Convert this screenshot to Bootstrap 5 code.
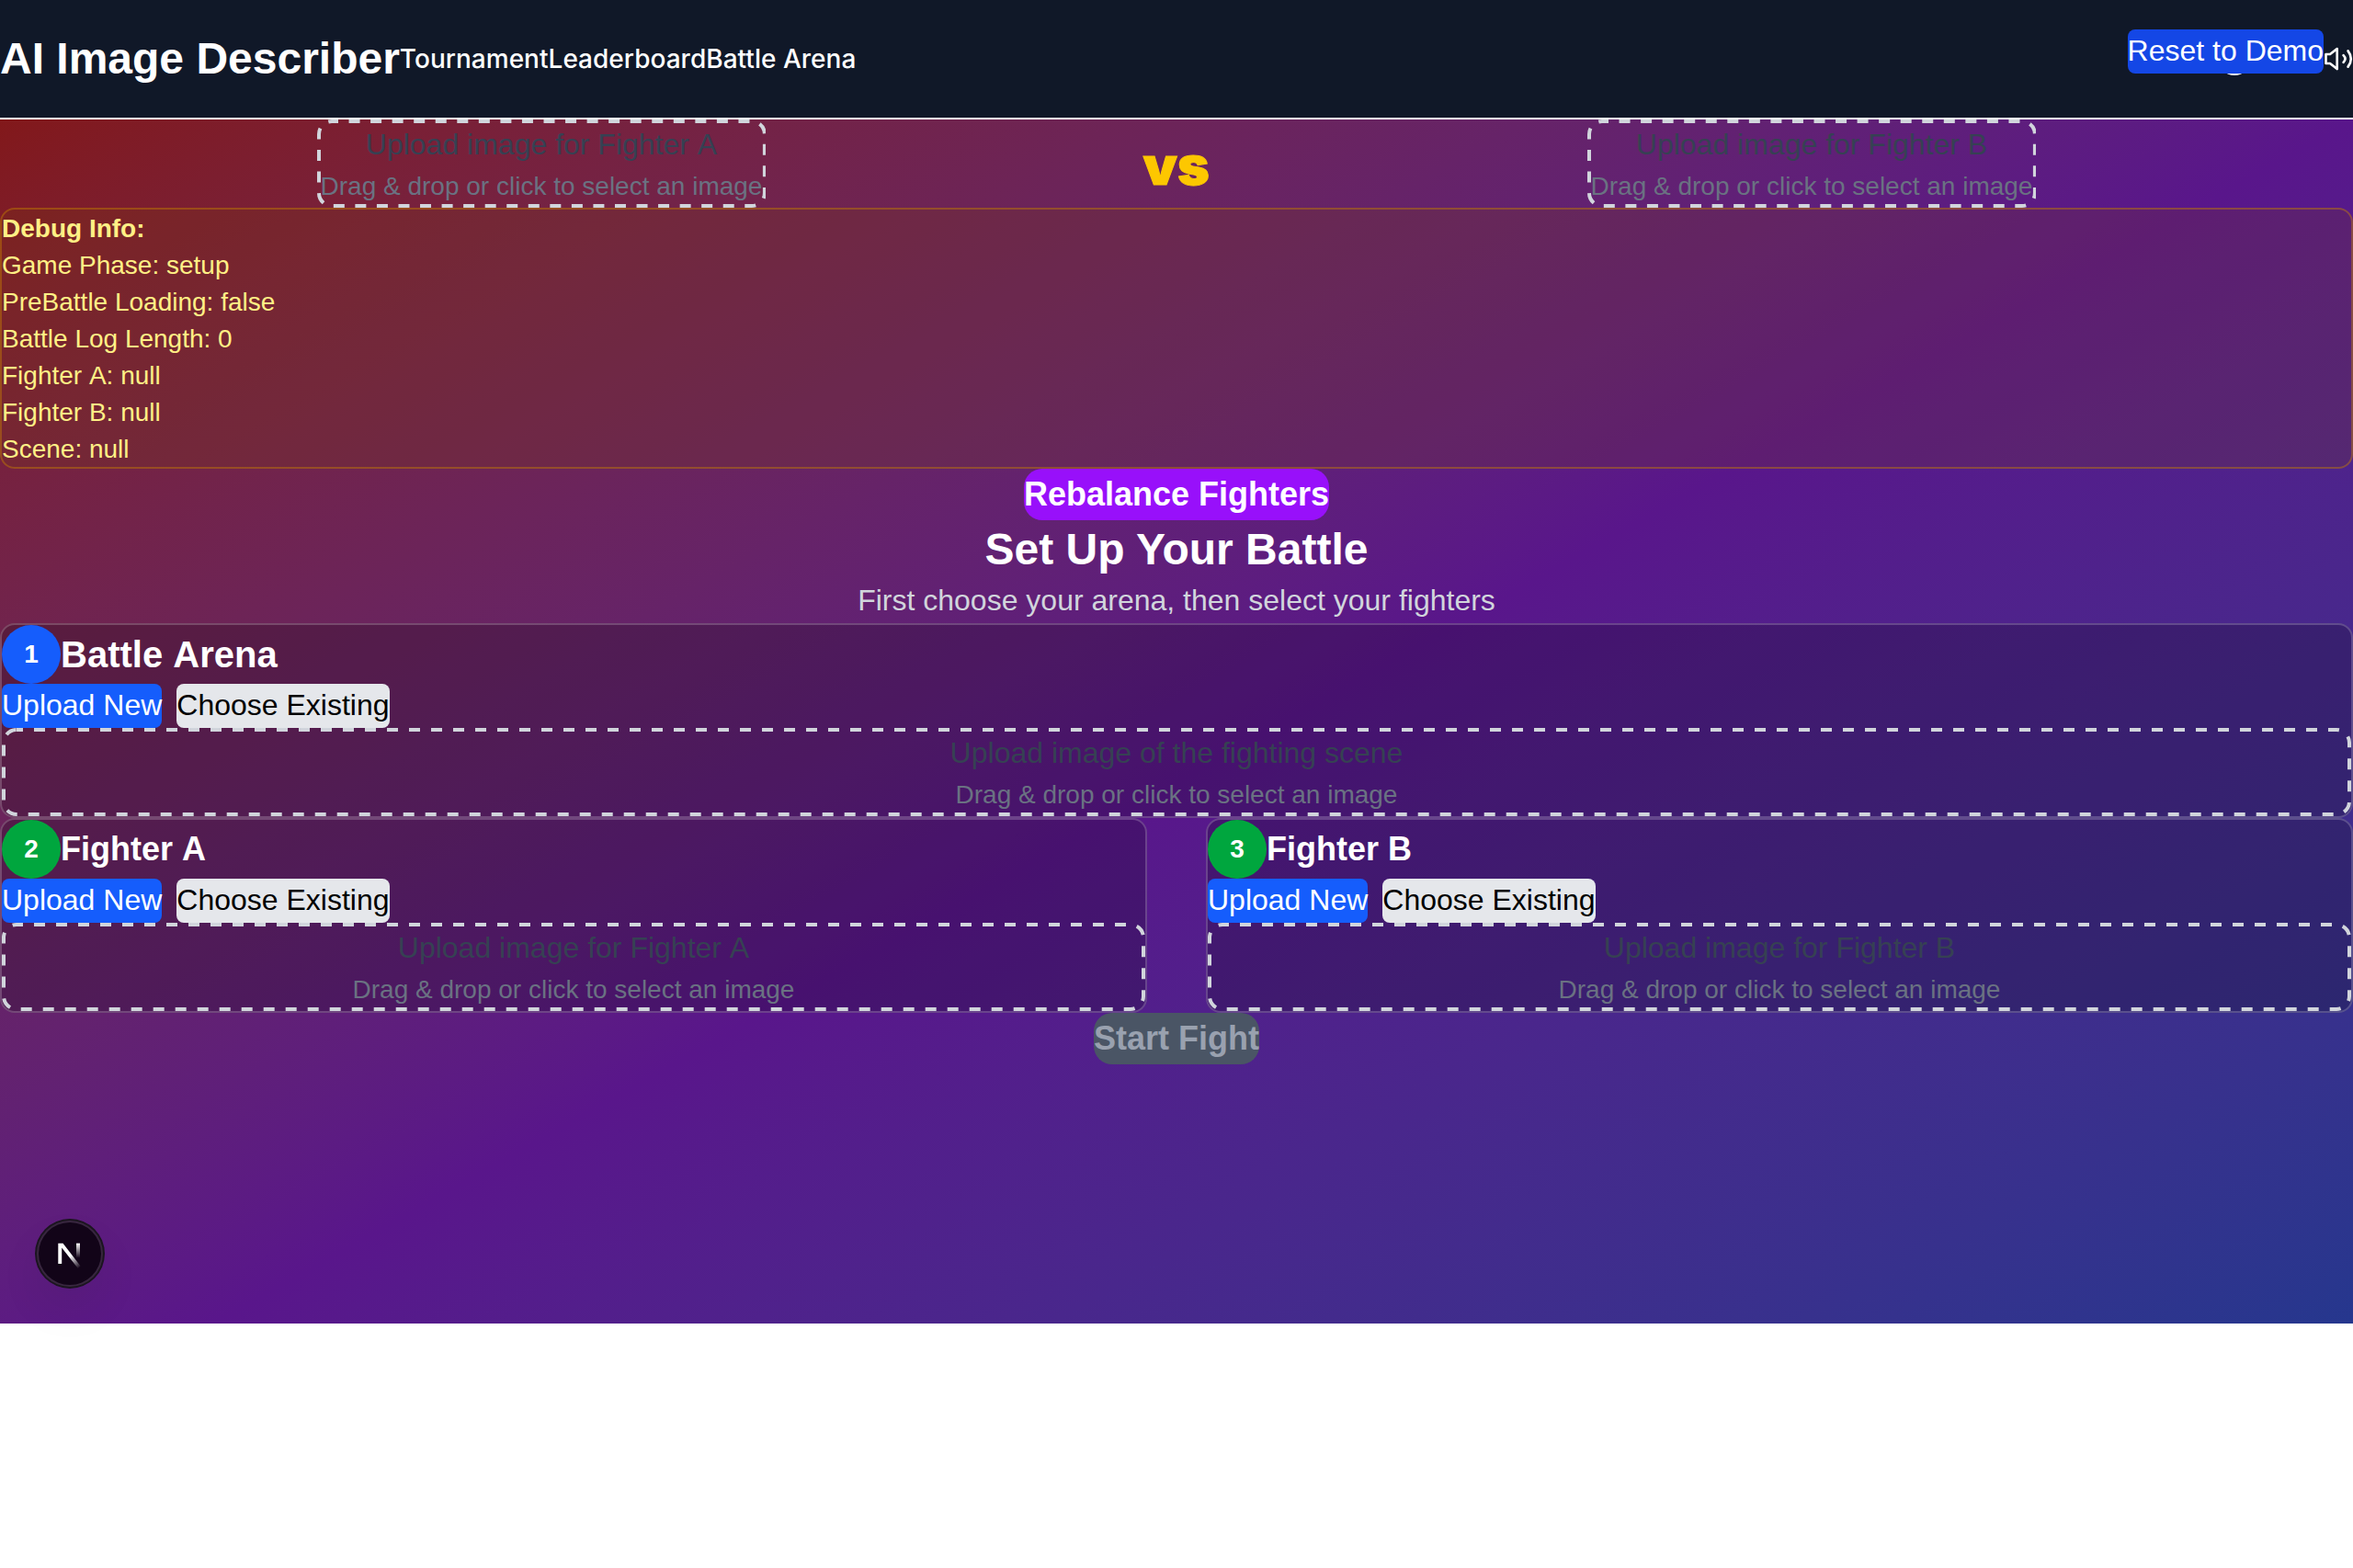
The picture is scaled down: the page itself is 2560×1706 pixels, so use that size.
<!DOCTYPE html>
<html lang="en">
<head>
<meta charset="utf-8">
<title>AI Image Describer</title>
<link href="https://cdn.jsdelivr.net/npm/bootstrap@5.3.0/dist/css/bootstrap.min.css" rel="stylesheet">
<style>
body{font-family:"Liberation Sans",Arial,sans-serif;font-size:32px;line-height:48px;color:#000;background:#fff;overflow:hidden}
.topbar{height:130px;background:#101828;border-bottom:2px solid #fff;color:#fff}
.brand{font-size:48px;line-height:64px}
.topnav a{font-family:Inter,sans-serif;font-size:28px;line-height:40px;font-weight:500;letter-spacing:.02px;color:#fff;text-decoration:none}
.arena{height:1310px;background:linear-gradient(to bottom right in oklab,#82181a 0%,#59168b 50%,#1c398e 100%) 0 0/100% 1440px no-repeat}
.reset,.pill,.big{border:0;padding:0;white-space:nowrap}
.reset{right:32px;top:32px;height:48px;line-height:46px;padding-bottom:2px;background:#1447e6;color:#fff;border-radius:8px;z-index:5}
.volume{width:194px}
.knob{width:36px;height:36px;background:#efefef}
.pill{height:48px;border-radius:8px;background:#155dfc;color:#fff;line-height:46px;padding-bottom:2px}
.pill.alt{background:#e5e7eb;color:#000}
.big{font-size:36px;line-height:56px;height:56px;font-weight:700;border-radius:20px;background:#9810fa;color:#fff}
.big.off{background:#4a5565;color:#99a1af}
.drop{position:relative;border:4px solid transparent;height:96px;text-align:center;color:#364153;line-height:46px;font-kerning:none}
.drop svg{position:absolute;left:-4px;top:-4px;width:calc(100% + 8px);height:96px}
.drop rect{x:2px;y:2px;width:calc(100% - 4px);height:92px;rx:14px;fill:none;stroke:#d1d5dc;stroke-width:4px;stroke-dasharray:12 12;stroke-dashoffset:5px}
.slot .drop rect{stroke-dasharray:12 11.55}
.drop small{display:block;font-size:28px;line-height:40px;padding-top:3px;color:#6a7282}
.slot{width:1178px}
.versus{font-family:Inter,sans-serif;font-weight:900;font-size:57px;line-height:72px;padding-top:5px;color:#fdc700;-webkit-text-stroke:1px #fdc700;transform:scaleX(1.04)}
.debug{border:2px solid rgba(208,135,0,.4);background:rgba(115,62,10,.2);border-radius:16px;font-size:28px;line-height:40px;color:#fff085;height:284px;padding-top:1px;font-kerning:none}
.setup h2{font-size:48px;line-height:64px;font-weight:700;color:#fff;margin:0}
.setup .sub{color:#d1d5dc;line-height:46px;padding-bottom:2px}
.panel{border:2px solid rgba(255,255,255,.2);background:rgba(0,0,0,.2);border-radius:16px;height:212px}
.num{width:64px;height:64px;border-radius:50%;background:#155dfc;color:#fff;font-weight:700;font-size:28px}
.num.go{background:#00a63e}
.panel h3{margin:0;color:#fff;font-weight:700;font-size:40px;line-height:56px;font-kerning:none}
.pair{gap:64px}
.pair .panel{flex:1 1 0}
.pair h3{font-size:36px}
.devtools{position:fixed;left:38px;top:1326px;width:76px;height:76px;border-radius:50%;box-shadow:0 24px 48px rgba(0,0,0,.06)}
</style>
</head>
<body>
<header class="topbar d-flex align-items-center justify-content-between position-relative">
<div class="d-flex align-items-center"><div class="brand fw-bold">AI Image Describer</div>
<nav class="topnav d-flex"><a href="#">Tournament</a><a href="#">Leaderboard</a><a href="#">Battle Arena</a></nav></div>
<div class="d-flex align-items-center">
<div class="volume d-flex justify-content-center"><span class="knob rounded-circle"></span></div>
<svg width="32" height="32" viewBox="0 0 32 32" fill="none" stroke="#fff" stroke-width="2.6" stroke-linecap="round" stroke-linejoin="round"><path d="M2.5 11v10H7l7.7 6V5L7 11z"/><path d="M21.6 12.2q3.8 3.8 0 7.6M26.6 7.4q6.4 8.6 0 17.2"/></svg>
</div>
<button class="reset position-absolute">Reset to Demo</button>
</header>
<main class="arena">
<section class="d-flex justify-content-between align-items-center">
<div class="slot d-flex justify-content-center"><div class="drop"><svg><rect/></svg>Upload image for Fighter A<small>Drag &amp; drop or click to select an image</small></div></div>
<div class="versus">vs</div>
<div class="slot d-flex justify-content-center"><div class="drop"><svg><rect/></svg>Upload image for Fighter B<small>Drag &amp; drop or click to select an image</small></div></div>
</section>
<section class="debug"><div class="fw-bold">Debug Info:</div><div>Game Phase: setup</div><div>PreBattle Loading: false</div><div>Battle Log Length: 0</div><div>Fighter A: null</div><div>Fighter B: null</div><div>Scene: null</div></section>
<section class="setup d-flex flex-column align-items-center"><button class="big">Rebalance Fighters</button><h2>Set Up Your Battle</h2><div class="sub">First choose your arena, then select your fighters</div></section>
<section class="panel">
<div class="d-flex align-items-center"><div class="num d-flex align-items-center justify-content-center">1</div><h3>Battle Arena</h3></div>
<div class="d-flex gap-3"><button class="pill">Upload New</button><button class="pill alt">Choose Existing</button></div>
<div class="drop"><svg><rect/></svg>Upload image of the fighting scene<small>Drag &amp; drop or click to select an image</small></div>
</section>
<div class="pair d-flex">
<section class="panel">
<div class="d-flex align-items-center"><div class="num go d-flex align-items-center justify-content-center">2</div><h3>Fighter A</h3></div>
<div class="d-flex gap-3"><button class="pill">Upload New</button><button class="pill alt">Choose Existing</button></div>
<div class="drop"><svg><rect/></svg>Upload image for Fighter A<small>Drag &amp; drop or click to select an image</small></div>
</section>
<section class="panel">
<div class="d-flex align-items-center"><div class="num go d-flex align-items-center justify-content-center">3</div><h3>Fighter B</h3></div>
<div class="d-flex gap-3"><button class="pill">Upload New</button><button class="pill alt">Choose Existing</button></div>
<div class="drop"><svg><rect/></svg>Upload image for Fighter B<small>Drag &amp; drop or click to select an image</small></div>
</section>
</div>
<div class="d-flex justify-content-center"><button class="big off">Start Fight</button></div>
</main>
<div class="devtools">
<svg class="d-block" width="76" height="76" viewBox="0 0 76 76">
<defs>
<linearGradient id="diag" gradientUnits="userSpaceOnUse" x1="38" y1="41" x2="48" y2="54"><stop stop-color="#fff"/><stop offset="1" stop-color="#fff" stop-opacity="0"/></linearGradient>
<linearGradient id="stem" x1="0" y1="0" x2="0" y2="1"><stop stop-color="#fff"/><stop offset="1" stop-color="#fff" stop-opacity="0"/></linearGradient>
</defs>
<circle cx="38" cy="38" r="38" fill="#1b151f"/><circle cx="38" cy="38" r="36" fill="#38263f"/><circle cx="38" cy="38" r="34" fill="#120418"/>
<path d="M25.3 49V26.7h5.2L49.6 51.6 46.8 54 29.2 31.5V49z" fill="url(#diag)"/>
<rect x="45" y="26.7" width="4" height="16" fill="url(#stem)"/>
</svg>
</div>
<script src="https://cdn.jsdelivr.net/npm/bootstrap@5.3.0/dist/js/bootstrap.bundle.min.js"></script>
</body>
</html>
